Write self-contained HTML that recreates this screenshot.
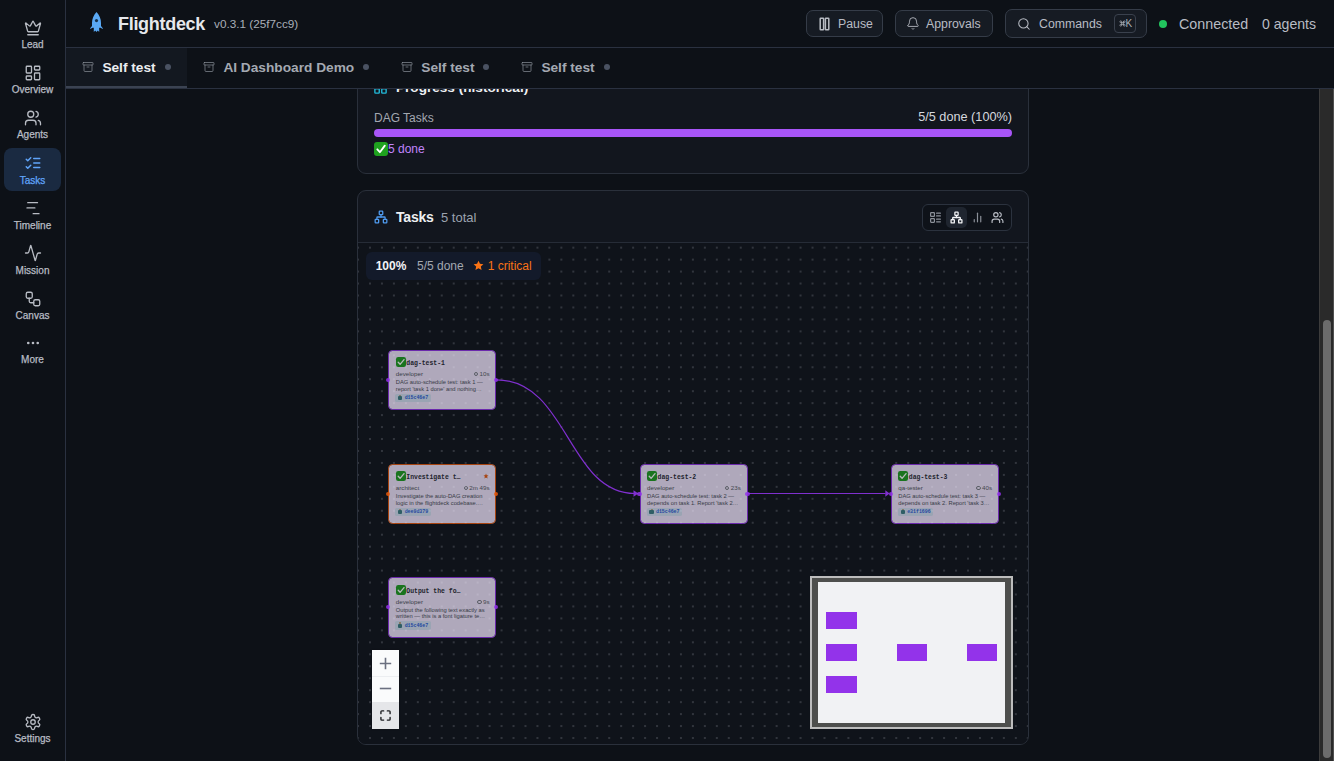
<!DOCTYPE html>
<html><head><meta charset="utf-8">
<style>
*{box-sizing:border-box;margin:0;padding:0}
html,body{width:1334px;height:761px;overflow:hidden;background:#0d1117;font-family:"Liberation Sans",sans-serif;color:#d1d5db}
.abs{position:absolute}
#side{position:absolute;left:0;top:0;width:66px;height:761px;background:#0d1117;border-right:1px solid #2a3140}
.nav{position:absolute;left:0;width:65px;text-align:center;font-size:10px;color:#b8bcc4}
.nav svg{position:absolute;left:23.5px;top:-0.5px;width:18px;height:18px;fill:none;stroke:#b8bcc4;stroke-width:1.75;stroke-linecap:round;stroke-linejoin:round}
.nav .lbl{position:absolute;left:0;width:65px;top:20px;line-height:12px;-webkit-text-stroke:0.25px currentColor}
#hdr{position:absolute;left:66px;top:0;width:1268px;height:48px;border-bottom:1px solid #2a3140;background:#0d1117}
#tabs{position:absolute;left:66px;top:48px;width:1268px;height:41px;border-bottom:1px solid #2a3140;background:#0d1117}
.btn{position:absolute;height:26px;border:1px solid #353c48;border-radius:7px;background:#161b23;font-size:12.3px;color:#b8bcc4;line-height:24px}
.btn svg{position:absolute;fill:none;stroke:#b8bcc4;stroke-width:1.5;stroke-linecap:round;stroke-linejoin:round}
.tab{position:absolute;top:0;height:40px;font-size:13.7px;color:#a9aeb7;line-height:40px}
.tab svg{position:absolute;top:13px;width:12px;height:12px;fill:none;stroke:#8b9099;stroke-width:1.4;stroke-linecap:round;stroke-linejoin:round}
.tdot{position:absolute;top:16px;width:6px;height:6px;border-radius:3px;background:#4a5262}
.card{position:absolute;left:357px;width:672px;background:#12161e;border:1px solid #2a303b;border-radius:9px}
#sb{position:absolute;left:1319px;top:89px;width:15px;height:672px;background:#2a2a2a;border-left:1px solid #3c3c3c;border-right:1px solid #4f4f4f}
#thumb{position:absolute;left:3px;top:231px;width:8px;height:438px;border-radius:4px;background:#6c6c6c}
/*cvcss*/
.nd{position:absolute;width:108px;height:60.2px;border:1.25px solid #9333ea;border-radius:4.5px;background:#f3e8ff;opacity:0.7;color:#1f2030;overflow:hidden}
.nd .ck{position:absolute;left:6.5px;top:6.4px;width:9.8px;height:9.8px;border-radius:2.2px;background:#1f9e22}
.nd .ck svg{position:absolute;left:0;top:0}
.nd .tt{position:absolute;left:17px;top:9.4px;font-family:"Liberation Mono",monospace;font-weight:bold;font-size:6.45px;line-height:8px;white-space:nowrap;color:#2a2a35;-webkit-text-stroke:0}
.nd .st{position:absolute;left:93.6px;top:8.2px}
.nd .mt{position:absolute;left:6.5px;top:19.6px;font-size:6.2px;line-height:8px;color:#50535d;white-space:nowrap}
.nd .tm{position:absolute;right:5.8px;top:19.4px;font-size:6.2px;line-height:8px;color:#5a5d68;white-space:nowrap}
.nd .clk{display:inline-block;width:4.2px;height:4.2px;border:0.5px solid #7a7d86;border-radius:50%;margin-right:1.4px;vertical-align:-0.2px}
.nd .ds{position:absolute;left:6.5px;top:28.4px;font-size:5.75px;line-height:6.67px;color:#4b4e5a;white-space:nowrap}
.nd .bd{position:absolute;left:6.2px;top:43px;width:35.2px;height:8.2px;border-radius:1.6px;background:#d6e2f5}
.nd .rb{position:absolute;left:2.6px;top:2.6px;width:4.4px;height:3.8px;border-radius:1px;background:#3d7f86}.nd .rb:before{content:"";position:absolute;left:1.2px;top:-1.6px;width:2px;height:1.6px;background:#b9a88a}
.nd .bt{position:absolute;left:9.2px;top:0.6px;font-family:"Liberation Mono",monospace;font-weight:bold;font-size:4.9px;line-height:7px;color:#2b5fd9;white-space:nowrap}
.hd{position:absolute;width:4.4px;height:4.4px;border-radius:50%;opacity:0.85}
.mm{width:31px;height:17px;background:#9333ea}
/*cvend*/</style></head><body>
<div id="side">
  <div class="nav" style="top:19px"><svg viewBox="0 0 24 24"><path d="M11.562 3.266a.5.5 0 0 1 .876 0L15.39 8.87a1 1 0 0 0 1.516.294L21.183 5.5a.5.5 0 0 1 .798.519l-2.834 10.246a1 1 0 0 1-.956.734H5.81a1 1 0 0 1-.957-.734L2.02 6.02a.5.5 0 0 1 .798-.519l4.276 3.664a1 1 0 0 0 1.516-.294z"/><path d="M5 21h14"/></svg><div class="lbl">Lead</div></div>
  <div class="nav" style="top:64px"><svg viewBox="0 0 24 24"><rect width="7" height="9" x="3" y="3" rx="1"/><rect width="7" height="5" x="14" y="3" rx="1"/><rect width="7" height="9" x="14" y="12" rx="1"/><rect width="7" height="5" x="3" y="16" rx="1"/></svg><div class="lbl">Overview</div></div>
  <div class="nav" style="top:109px"><svg viewBox="0 0 24 24"><path d="M16 21v-2a4 4 0 0 0-4-4H6a4 4 0 0 0-4 4v2"/><circle cx="9" cy="7" r="4"/><path d="M22 21v-2a4 4 0 0 0-3-3.87"/><path d="M16 3.13a4 4 0 0 1 0 7.75"/></svg><div class="lbl">Agents</div></div>
  <div class="abs" style="left:4px;top:148px;width:57px;height:43px;border-radius:8px;background:#1a2a41"></div>
  <div class="nav" style="top:155px;color:#60a5fa"><svg viewBox="0 0 24 24" style="stroke:#60a5fa;top:-1.5px;stroke-width:2"><path d="m3 17 2 2 4-4"/><path d="m3 7 2 2 4-4"/><path d="M13 6h8"/><path d="M13 12h8"/><path d="M13 18h8"/></svg><div class="lbl">Tasks</div></div>
  <div class="nav" style="top:200px"><svg viewBox="0 0 24 24"><path d="M5 3.5h13"/><path d="M4 10.5h10.5"/><path d="M12.2 18.2h7.8"/></svg><div class="lbl">Timeline</div></div>
  <div class="nav" style="top:245px"><svg viewBox="0 0 24 24" style="top:-1.5px"><path d="M22 12h-2.48a2 2 0 0 0-1.93 1.46l-2.35 8.36a.25.25 0 0 1-.48 0L9.24 2.18a.25.25 0 0 0-.48 0l-2.35 8.36A2 2 0 0 1 4.49 12H2"/></svg><div class="lbl">Mission</div></div>
  <div class="nav" style="top:290px"><svg viewBox="0 0 24 24"><rect width="8" height="8" x="3" y="3" rx="2"/><path d="M7 11v4a2 2 0 0 0 2 2h4"/><rect width="8" height="8" x="13" y="13" rx="2"/></svg><div class="lbl">Canvas</div></div>
  <div class="nav" style="top:334px"><svg viewBox="0 0 24 24"><circle cx="12" cy="12" r="0.9"/><circle cx="18.3" cy="12" r="0.9"/><circle cx="5.7" cy="12" r="0.9"/></svg><div class="lbl">More</div></div>
  <div class="nav" style="top:713px"><svg viewBox="0 0 24 24"><path d="M12.22 2h-.44a2 2 0 0 0-2 2v.18a2 2 0 0 1-1 1.73l-.43.25a2 2 0 0 1-2 0l-.15-.08a2 2 0 0 0-2.73.73l-.22.38a2 2 0 0 0 .73 2.73l.15.1a2 2 0 0 1 1 1.72v.51a2 2 0 0 1-1 1.74l-.15.09a2 2 0 0 0-.73 2.73l.22.38a2 2 0 0 0 2.73.73l.15-.08a2 2 0 0 1 2 0l.43.25a2 2 0 0 1 1 1.73V20a2 2 0 0 0 2 2h.44a2 2 0 0 0 2-2v-.18a2 2 0 0 1 1-1.73l.43-.25a2 2 0 0 1 2 0l.15.08a2 2 0 0 0 2.73-.73l.22-.39a2 2 0 0 0-.73-2.73l-.15-.08a2 2 0 0 1-1-1.74v-.5a2 2 0 0 1 1-1.74l.15-.09a2 2 0 0 0 .73-2.73l-.22-.38a2 2 0 0 0-2.73-.73l-.15.08a2 2 0 0 1-2 0l-.43-.25a2 2 0 0 1-1-1.73V4a2 2 0 0 0-2-2z"/><circle cx="12" cy="12" r="3"/></svg><div class="lbl">Settings</div></div>
</div>

<div id="hdr">
  <svg class="abs" style="left:24px;top:12px" width="13" height="21" viewBox="0 0 13 21"><path d="M6.5 0 C9.5 3 11 7 11 11 L11 14 L12.8 16.2 L12.8 17 L10.5 15.8 L9.2 15.8 L9.2 20 L7.8 18.5 L6.5 20 L5.2 18.5 L3.8 20 L3.8 15.8 L2.5 15.8 L0.2 17 L0.2 16.2 L2 14 L2 11 C2 7 3.5 3 6.5 0Z" fill="#5aa9f5"/><circle cx="6.5" cy="8.6" r="1.6" fill="#17304a"/></svg>
  <div class="abs" style="left:52px;top:12.5px;font-size:18px;font-weight:bold;color:#e6e8ec;letter-spacing:-0.3px;line-height:22px">Flightdeck</div>
  <div class="abs" style="left:148px;top:16.5px;font-size:11.75px;color:#a9aeb7;line-height:14px">v0.3.1 (25f7cc9)</div>
  <div class="btn" style="left:740px;top:10px;width:77px;height:27px"><svg style="left:12px;top:6px" width="12" height="14" viewBox="0 0 12 14"><rect x="1.2" y="1.2" width="3.4" height="11.6" rx="0.6"/><rect x="6.4" y="1.2" width="3.4" height="11.6" rx="0.6"/></svg><span class="abs" style="left:31px;top:1px">Pause</span></div>
  <div class="btn" style="left:829px;top:10px;width:98px;height:27px"><svg style="left:10px;top:4.5px" width="14" height="15" viewBox="0 0 24 24"><path d="M10.268 21a2 2 0 0 0 3.464 0"/><path d="M3.262 15.326A1 1 0 0 0 4 17h16a1 1 0 0 0 .74-1.673C19.41 13.956 18 12.499 18 8A6 6 0 0 0 6 8c0 4.499-1.411 5.956-2.738 7.326"/></svg><span class="abs" style="left:30px;top:1px">Approvals</span></div>
  <div class="btn" style="left:939px;top:9px;width:142px;height:29px;line-height:26px"><svg style="left:10.5px;top:7px;stroke-width:1.8" width="14" height="14" viewBox="0 0 24 24"><circle cx="11" cy="11" r="8"/><path d="m21 21-4.3-4.3"/></svg><span class="abs" style="left:33px;top:1px">Commands</span><div class="abs" style="left:108px;top:4px;width:22px;height:19px;border:1px solid #3a414d;border-radius:4px;font-size:9.5px;line-height:17px;color:#a9aeb6;font-weight:bold"><svg style="position:absolute;left:3.6px;top:5px;stroke:#a9aeb6;stroke-width:2.6" width="7" height="7" viewBox="0 0 24 24" fill="none"><path d="M15 6v12a3 3 0 1 0 3-3H6a3 3 0 1 0 3 3V6a3 3 0 1 0-3 3h12a3 3 0 1 0-3-3"/></svg><span class="abs" style="left:10.6px;top:0;font-weight:normal;font-size:10px">K</span></div></div>
  <div class="abs" style="left:1093px;top:20px;width:8px;height:8px;border-radius:4px;background:#22c55e"></div>
  <div class="abs" style="left:1113px;top:16px;font-size:14.3px;color:#b8bcc4;line-height:17px">Connected</div>
  <div class="abs" style="left:1196px;top:15.5px;font-size:14.1px;color:#b8bcc4;line-height:17px">0 agents</div>
</div>
<div id="tabs">
  <div class="abs" style="left:0;top:0;width:121px;height:40px;background:#131820"></div>
  <div class="abs" style="left:0;top:38px;width:121px;height:2px;background:#3b4352"></div>
<div class="tab" style="left:16.200000000000003px"><svg style="left:0" viewBox="0 0 24 24"><rect width="20" height="5" x="2" y="3" rx="1"/><path d="M4 8v11a2 2 0 0 0 2 2h12a2 2 0 0 0 2-2V8"/><path d="M10 12h4"/></svg><span class="abs" style="left:20.2px;font-weight:bold;color:#eceef1;white-space:nowrap">Self test</span><div class="tdot" style="left:82.99999999999999px"></div></div>
<div class="tab" style="left:137.2px"><svg style="left:0" viewBox="0 0 24 24"><rect width="20" height="5" x="2" y="3" rx="1"/><path d="M4 8v11a2 2 0 0 0 2 2h12a2 2 0 0 0 2-2V8"/><path d="M10 12h4"/></svg><span class="abs" style="left:20.2px;font-weight:bold;color:#a4a9b2;white-space:nowrap">AI Dashboard Demo</span><div class="tdot" style="left:159.40000000000003px"></div></div>
<div class="tab" style="left:335.1px"><svg style="left:0" viewBox="0 0 24 24"><rect width="20" height="5" x="2" y="3" rx="1"/><path d="M4 8v11a2 2 0 0 0 2 2h12a2 2 0 0 0 2-2V8"/><path d="M10 12h4"/></svg><span class="abs" style="left:20.2px;font-weight:bold;color:#a4a9b2;white-space:nowrap">Self test</span><div class="tdot" style="left:82.09999999999997px"></div></div>
<div class="tab" style="left:455.20000000000005px"><svg style="left:0" viewBox="0 0 24 24"><rect width="20" height="5" x="2" y="3" rx="1"/><path d="M4 8v11a2 2 0 0 0 2 2h12a2 2 0 0 0 2-2V8"/><path d="M10 12h4"/></svg><span class="abs" style="left:20.2px;font-weight:bold;color:#a4a9b2;white-space:nowrap">Self test</span><div class="tdot" style="left:82.79999999999995px"></div></div>
</div>

<div id="main" class="abs" style="left:66px;top:89px;width:1253px;height:672px;overflow:hidden">
 <div class="card" style="left:291px;top:-28px;height:113px">
  <svg class="abs" style="left:15px;top:18px" width="15" height="15" viewBox="0 0 24 24" fill="none" stroke="#22b8d8" stroke-width="2.2"><rect width="7" height="7" x="3" y="3" rx="1"/><rect width="7" height="7" x="14" y="3" rx="1"/><rect width="7" height="7" x="14" y="14" rx="1"/><rect width="7" height="7" x="3" y="14" rx="1"/></svg>
  <div class="abs" style="left:38px;top:17.5px;font-size:13.6px;font-weight:bold;color:#eef0f3;line-height:16px;white-space:nowrap">Progress (historical)</div>
  <div class="abs" style="left:16px;top:49px;font-size:12px;color:#a3a8b1;line-height:14px">DAG Tasks</div>
  <div class="abs" style="right:16px;top:48.3px;font-size:12.7px;color:#d6d9de;line-height:14px">5/5 done (100%)</div>
  <div class="abs" style="left:16px;top:67.3px;width:638px;height:8px;border-radius:4px;background:#a855f7"></div>
  <div class="abs" style="left:16px;top:80px;width:14px;height:14px;border-radius:3px;background:#1fa21f"><svg class="abs" style="left:1px;top:1px" width="12" height="12" viewBox="0 0 12 12"><path d="M2.3 6.3 L4.9 9.2 L9.8 2.6" fill="none" stroke="#fff" stroke-width="1.8" stroke-linecap="round" stroke-linejoin="round"/></svg></div>
  <div class="abs" style="left:30px;top:79px;font-size:12px;color:#c084fc;line-height:16px">5 done</div>
 </div>
 <div class="card" style="left:291px;top:101px;height:555px;overflow:hidden">
  <svg class="abs" style="left:15.5px;top:18.8px" width="14" height="14" viewBox="0 0 24 24" fill="none" stroke="#4f9bf0" stroke-width="2.2" stroke-linecap="round" stroke-linejoin="round"><rect x="16" y="16" width="6" height="6" rx="1"/><rect x="2" y="16" width="6" height="6" rx="1"/><rect x="9" y="2" width="6" height="6" rx="1"/><path d="M5 16v-3a1 1 0 0 1 1-1h12a1 1 0 0 1 1 1v3"/><path d="M12 12V8"/></svg>
  <div class="abs" style="left:38px;top:18px;font-size:14px;font-weight:bold;color:#eef0f3;line-height:16px;letter-spacing:-0.2px">Tasks</div>
  <div class="abs" style="left:83px;top:18.5px;font-size:13px;color:#9ca3af;line-height:16px">5 total</div>
  <div class="abs" style="left:564px;top:12.5px;width:89.5px;height:27px;border:1px solid #2b323e;border-radius:6px;background:#0e1219">
   <div class="abs" style="left:23px;top:2px;width:21px;height:21px;border-radius:5px;background:#1f252f"></div>
   <svg class="abs" style="left:6px;top:6px" width="13" height="13" viewBox="0 0 24 24" fill="none" stroke="#8b9099" stroke-width="2.2" stroke-linecap="round" stroke-linejoin="round"><rect width="7" height="7" x="3" y="3" rx="1"/><rect width="7" height="7" x="3" y="14" rx="1"/><path d="M14 4h7"/><path d="M14 9h7"/><path d="M14 15h7"/><path d="M14 20h7"/></svg>
   <svg class="abs" style="left:27px;top:6px" width="13" height="13" viewBox="0 0 24 24" fill="none" stroke="#f3f4f6" stroke-width="2.4" stroke-linecap="round" stroke-linejoin="round"><rect x="16" y="16" width="6" height="6" rx="1"/><rect x="2" y="16" width="6" height="6" rx="1"/><rect x="9" y="2" width="6" height="6" rx="1"/><path d="M5 16v-3a1 1 0 0 1 1-1h12a1 1 0 0 1 1 1v3"/><path d="M12 12V8"/></svg>
   <svg class="abs" style="left:48px;top:6px" width="13" height="13" viewBox="0 0 24 24" fill="none" stroke="#8b9099" stroke-width="2.2" stroke-linecap="round"><path d="M12 20V4"/><path d="M18 20V10"/><path d="M6 20v-4"/></svg>
   <svg class="abs" style="left:68px;top:6px" width="13" height="13" viewBox="0 0 24 24" fill="none" stroke="#b8bcc4" stroke-width="2.2" stroke-linecap="round"><path d="M16 21v-2a4 4 0 0 0-4-4H6a4 4 0 0 0-4 4v2"/><circle cx="9" cy="7" r="4"/><path d="M22 21v-2a4 4 0 0 0-3-3.87"/><path d="M16 3.13a4 4 0 0 1 0 7.75"/></svg>
  </div>
  <div class="abs" style="left:0;top:51px;width:670px;height:1px;background:#262c37"></div>
  <div id="canvas" class="abs" style="left:0;top:52px;width:670px;height:502px;background:#0f131a"><svg width="670" height="502" style="position:absolute;left:0;top:0"><defs><pattern id="dots" patternUnits="userSpaceOnUse" x="6.02" y="46.52" width="11.96" height="11.96"><rect x="5.28" y="5.55" width="1.4" height="0.85" fill="#80848c"/></pattern></defs><rect width="670" height="502" fill="url(#dots)"/></svg>
  </div>
 </div>
</div>
<div id="ov" class="abs" style="left:0;top:0;width:1334px;height:761px">
<div class="abs" style="left:365.7px;top:251.7px;width:175.3px;height:28px;border-radius:6px;background:#131a2a">
 <div class="abs" style="left:10px;top:7px;font-size:12px;font-weight:bold;color:#f1f3f6;line-height:14px">100%</div>
 <div class="abs" style="left:51.3px;top:7px;font-size:12px;color:#a3a8b1;line-height:14px;white-space:nowrap">5/5 done</div>
 <svg class="abs" style="left:107.8px;top:8.3px" width="11" height="11" viewBox="0 0 24 24"><path d="M12 1.5l3.2 6.9 7.5.8-5.6 5.1 1.6 7.4L12 17.9l-6.7 3.8 1.6-7.4L1.3 9.2l7.5-.8z" fill="#f97316"/></svg>
 <div class="abs" style="left:122px;top:7px;font-size:12px;color:#f97316;line-height:14px;white-space:nowrap">1 critical</div>
</div><svg class="abs" style="left:0;top:0" width="1334" height="761">
 <path d="M496.3 379.8 C568 379.8 568 493.5 635 493.5" fill="none" stroke="#8030cf" stroke-width="1.2"/>
 <path d="M747.6 493.5 L885.5 493.5" fill="none" stroke="#8030cf" stroke-width="1.2"/>
 <path d="M633.5 490.2 L638.4 493.5 L633.5 496.8 Z" fill="#8030cf"/>
 <path d="M885.3 490.2 L889.6 493.5 L885.3 496.8 Z" fill="#8030cf"/>
</svg><div class="nd" style="left:388.3px;top:349.9px;border-color:#9333ea">
 <div class="ck"><svg width="10" height="10" viewBox="0 0 10 10"><path d="M2.2 5.2 L4.1 7.3 L8 2.6" fill="none" stroke="#fff" stroke-width="1.3" stroke-linecap="round" stroke-linejoin="round"/></svg></div>
 <div class="tt">dag-test-1</div>
 
 <div class="mt">developer</div>
 <div class="tm"><span class="clk"></span>10s</div>
 <div class="ds">DAG auto-schedule test: task 1 —<br>report 'task 1 done' and nothing…</div>
 <div class="bd"><span class="rb"></span><span class="bt">d15c46e7</span></div>
</div>
<div class="hd" style="left:386.1px;top:377.59999999999997px;background:#9333ea"></div>
<div class="hd" style="left:494.1px;top:377.59999999999997px;background:#9333ea"></div>
<div class="nd" style="left:388.3px;top:463.8px;border-color:#e8590c">
 <div class="ck"><svg width="10" height="10" viewBox="0 0 10 10"><path d="M2.2 5.2 L4.1 7.3 L8 2.6" fill="none" stroke="#fff" stroke-width="1.3" stroke-linecap="round" stroke-linejoin="round"/></svg></div>
 <div class="tt">Investigate t…</div>
 <svg class="st" width="6" height="6" viewBox="0 0 24 24"><path d="M12 2l2.9 6.9 7.1.6-5.4 4.7 1.7 7.3L12 17.6 5.7 21.5l1.7-7.3L2 9.5l7.1-.6z" fill="#e8590c"/></svg>
 <div class="mt">architect</div>
 <div class="tm"><span class="clk"></span>2m 49s</div>
 <div class="ds">Investigate the auto-DAG creation<br>logic in the flightdeck codebase.…</div>
 <div class="bd"><span class="rb"></span><span class="bt">dee9d379</span></div>
</div>
<div class="hd" style="left:386.1px;top:491.5px;background:#e8590c"></div>
<div class="hd" style="left:494.1px;top:491.5px;background:#e8590c"></div>
<div class="nd" style="left:388.3px;top:577.4px;border-color:#9333ea">
 <div class="ck"><svg width="10" height="10" viewBox="0 0 10 10"><path d="M2.2 5.2 L4.1 7.3 L8 2.6" fill="none" stroke="#fff" stroke-width="1.3" stroke-linecap="round" stroke-linejoin="round"/></svg></div>
 <div class="tt">Output the fo…</div>
 
 <div class="mt">developer</div>
 <div class="tm"><span class="clk"></span>9s</div>
 <div class="ds">Output the following text exactly as<br>written — this is a font ligature te…</div>
 <div class="bd"><span class="rb"></span><span class="bt">d15c46e7</span></div>
</div>
<div class="hd" style="left:386.1px;top:605.1px;background:#9333ea"></div>
<div class="hd" style="left:494.1px;top:605.1px;background:#9333ea"></div>
<div class="nd" style="left:639.6px;top:463.8px;border-color:#9333ea">
 <div class="ck"><svg width="10" height="10" viewBox="0 0 10 10"><path d="M2.2 5.2 L4.1 7.3 L8 2.6" fill="none" stroke="#fff" stroke-width="1.3" stroke-linecap="round" stroke-linejoin="round"/></svg></div>
 <div class="tt">dag-test-2</div>
 
 <div class="mt">developer</div>
 <div class="tm"><span class="clk"></span>23s</div>
 <div class="ds">DAG auto-schedule test: task 2 —<br>depends on task 1. Report 'task 2…</div>
 <div class="bd"><span class="rb"></span><span class="bt">d15c46e7</span></div>
</div>
<div class="hd" style="left:637.4px;top:491.5px;background:#9333ea"></div>
<div class="hd" style="left:745.4px;top:491.5px;background:#9333ea"></div>
<div class="nd" style="left:890.8px;top:463.8px;border-color:#9333ea">
 <div class="ck"><svg width="10" height="10" viewBox="0 0 10 10"><path d="M2.2 5.2 L4.1 7.3 L8 2.6" fill="none" stroke="#fff" stroke-width="1.3" stroke-linecap="round" stroke-linejoin="round"/></svg></div>
 <div class="tt">dag-test-3</div>
 
 <div class="mt">qa-tester</div>
 <div class="tm"><span class="clk"></span>40s</div>
 <div class="ds">DAG auto-schedule test: task 3 —<br>depends on task 2. Report 'task 3…</div>
 <div class="bd"><span class="rb"></span><span class="bt">e31f1696</span></div>
</div>
<div class="hd" style="left:888.5999999999999px;top:491.5px;background:#9333ea"></div>
<div class="hd" style="left:996.5999999999999px;top:491.5px;background:#9333ea"></div>
<div class="abs" style="left:810px;top:576px;width:203px;height:153px;background:#4e4f4d;border:2px solid #bdbdbd">
 <div class="abs" style="left:6px;top:4.2px;width:187px;height:140.5px;background:#f1f2f4"></div>
 <div class="abs mm" style="left:14px;top:34px"></div>
 <div class="abs mm" style="left:14px;top:66px"></div>
 <div class="abs mm" style="left:14px;top:98px"></div>
 <div class="abs mm" style="left:85px;top:66px;width:30px"></div>
 <div class="abs mm" style="left:155px;top:66px;width:30px"></div>
</div><div class="abs" style="left:372px;top:650px;width:27px;height:79px;background:#fafbfc;box-shadow:0 0 2px rgba(0,0,0,.2)">
 <div class="abs" style="left:0;top:25.5px;width:27px;height:1px;background:#eceef1"></div>
 <div class="abs" style="left:0;top:52.4px;width:27px;height:26.6px;background:#e5e6e9"></div>
 <svg class="abs" style="left:7px;top:6.5px" width="13" height="13" viewBox="0 0 13 13"><path d="M6.5 0.8V12.2M0.8 6.5H12.2" stroke="#6b7080" stroke-width="1.6"/></svg>
 <svg class="abs" style="left:7px;top:32.3px" width="13" height="13" viewBox="0 0 13 13"><path d="M0.8 6.5H12.2" stroke="#6b7080" stroke-width="1.6"/></svg>
 <svg class="abs" style="left:8px;top:60px" width="11" height="11" viewBox="0 0 12 12" fill="none" stroke="#1b1c20" stroke-width="1.5" stroke-linecap="round"><path d="M1 4V2a1 1 0 0 1 1-1h2M8 1h2a1 1 0 0 1 1 1v2M11 8v2a1 1 0 0 1-1 1H8M4 11H2a1 1 0 0 1-1-1V8"/></svg>
</div></div>
<!--ovend-->
<div id="sb"><div id="thumb"></div></div>
</body></html>
